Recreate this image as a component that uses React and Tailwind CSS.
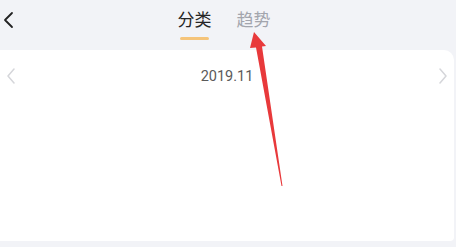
import React from 'react';

const CJK = { fontFamily: 'Roboto, "Noto Sans CJK SC", sans-serif' };

export default function App() {
  return (
    <div className="relative w-[456px] h-[247px] bg-[#f2f3f7] overflow-hidden" style={CJK}>
      {/* Header */}
      <div className="relative h-[50px] flex items-start justify-center">
        <button className="absolute left-[2px] top-[11px] text-[#222]">
          <svg width="14" height="18" viewBox="0 0 14 18" fill="none" stroke="currentColor" strokeWidth="1.8" strokeLinecap="round" strokeLinejoin="round">
            <path d="M10 2 L3 9 L10 16" />
          </svg>
        </button>
        <div className="flex gap-[25px] pt-[9px] ml-[-8px]">
          <div className="flex flex-col items-center">
            <span className="text-[17px] leading-[22px] text-[#262626]">分类</span>
            <span className="mt-[6px] w-[29px] h-[3px] rounded-full bg-[#f5c47a]"></span>
          </div>
          <div className="flex flex-col items-center">
            <span className="text-[17px] leading-[22px] text-[#a3a5ad]">趋势</span>
          </div>
        </div>
      </div>

      {/* Card */}
      <div className="w-[454px] h-[191px] bg-white rounded-tr-[10px] rounded-br-[4px]">
        <div className="flex items-center justify-between px-[6px] pt-[17px]">
          <svg width="10" height="16" viewBox="0 0 10 16" fill="none" stroke="#d5d6da" strokeWidth="1.5" strokeLinecap="round" strokeLinejoin="round">
            <path d="M8 1 L2 8 L8 15" />
          </svg>
          <span className="text-[14.5px] leading-[18px] text-[#5a5a5a] translate-y-[1px]">2019.11</span>
          <svg width="10" height="16" viewBox="0 0 10 16" fill="none" stroke="#d5d6da" strokeWidth="1.5" strokeLinecap="round" strokeLinejoin="round">
            <path d="M2 1 L8 8 L2 15" />
          </svg>
        </div>
      </div>

      {/* Red annotation arrow */}
      <svg className="absolute left-0 top-0 pointer-events-none" width="456" height="247" viewBox="0 0 456 247">
        <polygon points="254,32 250,48 256,47.5 281.5,186 282.5,186 262,46.5 266,46" fill="#e8393b" />
      </svg>
    </div>
  );
}
